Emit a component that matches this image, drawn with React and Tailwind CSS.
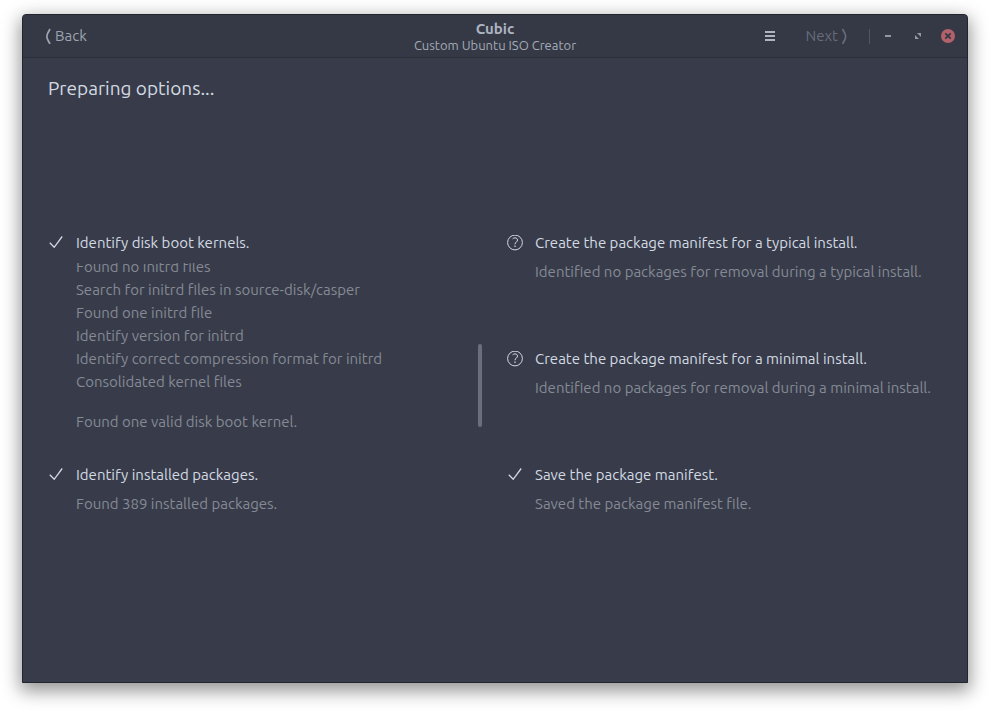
import React from "react";

const bootLog = [
  "Found no initrd files",
  "Search for initrd files in source-disk/casper",
  "Found one initrd file",
  "Identify version for initrd",
  "Identify correct compression format for initrd",
  "Consolidated kernel files",
];

function CheckIcon() {
  return (
    <svg className="h-4 w-4 shrink-0" viewBox="0 0 16 16" fill="none" stroke="#d3dae3" strokeWidth="1.3" aria-label="Done">
      <path d="M1.800 7.800 6.200 12.300 14.200 1.500" />
    </svg>
  );
}

function QuestionIcon() {
  return (
    <svg className="h-4 w-4 shrink-0" viewBox="0 0 16 16" fill="none" stroke="#d3dae3" aria-label="Optional">
      <circle cx="8" cy="7.500" r="7.400" strokeWidth="1" />
      <path d="M5.600 3.800C6.200 3.200 7 2.900 8 2.900c1.500 0 2.500.8 2.500 2.100 0 2-2.500 2.100-2.500 4.300" strokeWidth="1" />
      <path d="M8 10.500v1.500" strokeWidth="1.200" />
    </svg>
  );
}

function Task({ icon, title, className = "", children }) {
  return (
    <section className={`flex min-w-0 flex-col ${className}`}>
      <h2 className="flex items-center gap-3 text-[15px] leading-6 whitespace-nowrap text-[#d3dae3]">
        {icon}
        {title}
      </h2>
      {children}
    </section>
  );
}

function Result({ children }) {
  return <p className="mt-[5px] pl-7 text-[15px] leading-6 whitespace-nowrap text-[#858a95]">{children}</p>;
}

export default function App() {
  return (
    <div className="flex min-h-screen bg-white px-[22px] pt-[14px] pb-[30px] font-['Ubuntu','Noto_Sans',sans-serif]">
      <main className="flex min-w-0 flex-1 flex-col overflow-hidden rounded-t-[4px] border border-[#22252e] bg-[#383c4a] shadow-[0_6px_18px_2px_rgba(0,0,0,0.42)]">
        <header className="grid h-[43px] shrink-0 grid-cols-[1fr_auto_1fr] items-center border-b border-[#2b2e39] bg-[#353945] px-3 text-[#9da4b1]">
          <button type="button" className="flex items-center gap-1 justify-self-start pl-2 text-[15px]">
            <svg className="h-4 w-2" viewBox="0 0 8 16" fill="none" stroke="currentColor" strokeWidth="1.7" aria-hidden="true">
              <path d="M7 1 4.600 5.500Q3.200 8.500 4.600 11.500L7 16" />
            </svg>
            Back
          </button>
          <div className="pt-[2px] text-center">
            <h1 className="text-[15px] leading-4 font-bold text-[#adb4c1]">Cubic</h1>
            <p className="text-[13px] leading-4 text-[#a3abb8]">Custom Ubuntu ISO Creator</p>
          </div>
          <div className="flex items-center justify-self-end">
            <button type="button" aria-label="Menu" className="mr-[30px]">
              <svg className="h-3 w-3" viewBox="0 0 12 12" fill="#afb5c0" shapeRendering="crispEdges">
                <path d="M1 1h10v2H1zM1 5h10v2H1zM1 9h10v2H1z" />
              </svg>
            </button>
            <button type="button" disabled className="flex items-center gap-[3px] text-[15px] text-[#666c79]">
              Next
              <svg className="h-4 w-2" viewBox="0 0 8 16" fill="none" stroke="currentColor" strokeWidth="1.7" aria-hidden="true">
                <path d="M1.500 1 3.900 5.500Q5.300 8.500 3.900 11.500L1.500 16" />
              </svg>
            </button>
            <span className="ml-5 h-[15px] w-px bg-[#505561]" />
            <button type="button" aria-label="Minimize" className="ml-[11px]">
              <svg className="h-[14px] w-[14px]" viewBox="0 0 14 14" fill="#9298a4" shapeRendering="crispEdges">
                <path d="M4 6h6v2H4z" />
              </svg>
            </button>
            <button type="button" aria-label="Maximize" className="ml-4">
              <svg className="h-[14px] w-[14px]" viewBox="0 0 14 14" fill="#9298a4">
                <path d="M6 4h4v4zM4 6l4 4H4z" />
              </svg>
            </button>
            <button type="button" aria-label="Close" className="ml-4">
              <svg className="h-[14px] w-[14px]" viewBox="0 0 14 14">
                <circle cx="7" cy="7" r="7" fill="#b3616a" />
                <path d="m4.300 4.300 5.400 5.400m0-5.400-5.400 5.400" stroke="#353945" strokeWidth="1.800" />
              </svg>
            </button>
          </div>
        </header>

        <div className="flex-1 px-[25px] pt-4">
          <p className="text-[19px] leading-7 text-[#d3dae3]">Preparing options...</p>

          <div className="mt-[129px] grid grid-cols-2 grid-rows-[repeat(3,116px)] gap-x-6">
            <Task icon={<CheckIcon />} title="Identify disk boot kernels." className="row-span-2">
              <div className="relative mt-2 flex h-[170px] flex-col justify-end overflow-hidden pl-7 text-[15px] leading-[23px] whitespace-nowrap text-[#858a95]">
                {bootLog.map((line) => (
                  <p key={line}>{line}</p>
                ))}
                <p className="mt-[17px]">Found one valid disk boot kernel.</p>
                <span className="absolute right-px bottom-[6px] h-[83px] w-1 rounded-full bg-[#6b6f7b]" />
              </div>
            </Task>
            <Task icon={<QuestionIcon />} title="Create the package manifest for a typical install.">
              <Result>Identified no packages for removal during a typical install.</Result>
            </Task>
            <Task icon={<QuestionIcon />} title="Create the package manifest for a minimal install.">
              <Result>Identified no packages for removal during a minimal install.</Result>
            </Task>
            <Task icon={<CheckIcon />} title="Identify installed packages.">
              <Result>Found 389 installed packages.</Result>
            </Task>
            <Task icon={<CheckIcon />} title="Save the package manifest.">
              <Result>Saved the package manifest file.</Result>
            </Task>
          </div>
        </div>
      </main>
    </div>
  );
}
